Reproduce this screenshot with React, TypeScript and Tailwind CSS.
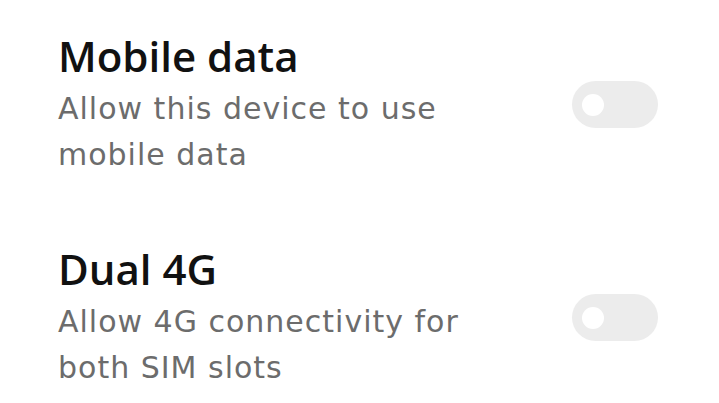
function Toggle() {
  return (
    <div className="flex h-[47px] w-[86px] shrink-0 items-center rounded-full bg-[#ececec] pl-[10px]">
      <div className="h-[22px] w-[22px] rounded-full bg-white" />
    </div>
  )
}

function Row({ title, desc }: { title: string; desc: string }) {
  return (
    <div className="flex items-center justify-between">
      <div className="w-[475px]">
        <div className="font-['Open_Sans',sans-serif] text-[42px] leading-[50px] font-semibold text-[#111]">
          {title}
        </div>
        <div className="mt-[5px] font-['DejaVu_Sans',sans-serif] text-[30px] leading-[46px] tracking-[1px] text-[#6c6c6c]">
          {desc}
        </div>
      </div>
      <Toggle />
    </div>
  )
}

export default function App() {
  return (
    <div className="h-[403px] w-[719px] overflow-hidden bg-white pl-[58px] pr-[61px] pt-[31px]">
      <div className="flex flex-col gap-[66px]">
        <Row title="Mobile data" desc="Allow this device to use mobile data" />
        <Row title="Dual 4G" desc="Allow 4G connectivity for both SIM slots" />
      </div>
    </div>
  )
}
